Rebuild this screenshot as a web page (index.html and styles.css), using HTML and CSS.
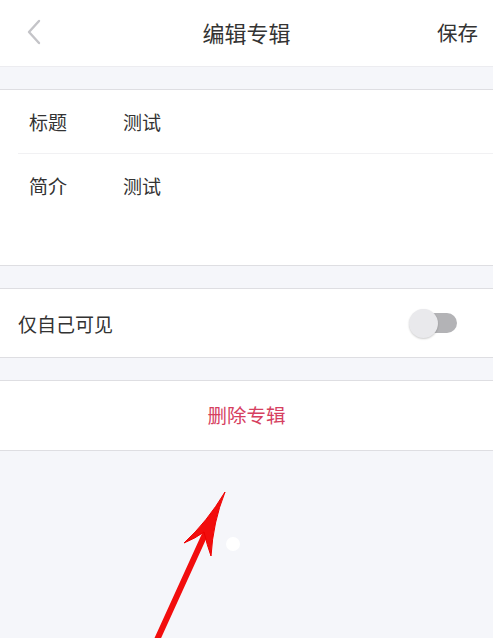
FILE: index.html
```html
<!DOCTYPE html>
<html lang="zh">
<head>
<meta charset="utf-8">
<link rel="stylesheet" href="styles.css">
</head>
<body>
<div class="page">
  <header class="nav">
    <span class="back"><svg width="16" height="26" viewBox="0 0 16 26"><path d="M13 2 L3 13 L13 24" fill="none" stroke="#c4c4c8" stroke-width="2.4" stroke-linecap="round" stroke-linejoin="round"/></svg></span>
    <span class="title">编辑专辑</span>
    <span class="save">保存</span>
  </header>
  <div class="gap first"></div>
  <section class="group">
    <div class="field"><span class="label">标题</span><span class="value">测试</span></div>
    <div class="field intro"><span class="label">简介</span><span class="value">测试</span></div>
  </section>
  <div class="gap"></div>
  <section class="group">
    <div class="switch-row">
      <span class="switch-label">仅自己可见</span>
      <span class="toggle"><span class="track"></span><span class="knob"></span></span>
    </div>
  </section>
  <div class="gap"></div>
  <section class="group">
    <div class="delete">删除专辑</div>
  </section>
  <svg class="overlay" width="493" height="638" viewBox="0 0 493 638">
    <circle cx="233" cy="544" r="7" fill="#ffffff"/>
    <line x1="156" y1="642" x2="206" y2="532" stroke="#f20d0d" stroke-width="6" stroke-linecap="round"/>
    <path d="M225 492 Q207 522 184 543 Q196 538 204 532 Q207 545 211 556 Q213 522 225 492 Z" fill="#f20d0d" stroke="#e00" stroke-width="1" stroke-linejoin="round"/>
  </svg>
</div>
</body>
</html>
```
FILE: styles.css
```css
* { box-sizing: border-box; }
html, body { margin: 0; padding: 0; }
body {
  background: #f5f6fa;
  font-family: "Noto Sans CJK SC", "Noto Sans", sans-serif;
  color: #333;
}
.page {
  position: relative;
  width: 493px;
  height: 638px;
  overflow: hidden;
}
.nav {
  height: 67px;
  background: #fff;
  border-bottom: 1px solid #ececf0;
  display: flex;
  align-items: center;
  position: relative;
  padding: 0 15px 0 26px;
}
.back { display: flex; align-items: center; margin-top: -2px; }
.title {
  position: absolute;
  left: 0; right: 0;
  text-align: center;
  font-size: 22px;
  color: #333;
  margin-top: -2px;
  pointer-events: none;
}
.save {
  margin-left: auto;
  font-size: 20.5px;
  color: #333;
  margin-top: -2px;
}
.gap { height: 22px; }
.group {
  background: #fff;
  border-top: 1px solid #dedee2;
  border-bottom: 1px solid #dedee2;
}
.field {
  display: flex;
  align-items: flex-start;
  height: 64px;
  padding: 20px 0 0 29px;
  font-size: 19px;
  line-height: 24px;
  color: #333;
  position: relative;
}
.field:first-child::after {
  content: "";
  position: absolute;
  left: 18px; right: 0; bottom: 0;
  height: 1px;
  background: #f1f1f3;
}
.field.intro { height: 111px; }
.label { width: 94px; }
.switch-row {
  height: 68px;
  display: flex;
  align-items: center;
  padding: 0 36px 0 18px;
  font-size: 19px;
}
.switch-label { margin-top: 1px; }
.toggle {
  margin-left: auto;
  position: relative;
  width: 48px;
  height: 30px;
  display: flex;
  align-items: center;
}
.track {
  position: absolute;
  left: 6px; right: 0;
  height: 20px;
  border-radius: 10px;
  background: #b3b3b6;
}
.knob {
  position: absolute;
  left: 0;
  width: 29px;
  height: 29px;
  border-radius: 50%;
  background: #e9e9ec;
  box-shadow: 0 1px 2px rgba(0,0,0,0.2);
}
.delete {
  height: 69px;
  display: flex;
  align-items: center;
  justify-content: center;
  font-size: 19.5px;
  color: #d6405f;
  padding-bottom: 2px;
}
.overlay {
  position: absolute;
  left: 0; top: 0;
}
```
